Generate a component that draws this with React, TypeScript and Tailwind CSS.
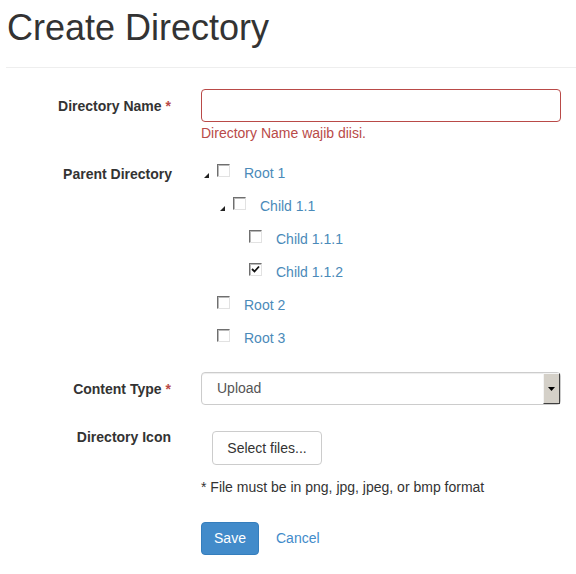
import React from 'react';

const font = { fontFamily: '"Liberation Sans", Arial, sans-serif' };

function Box({ checked = false }: { checked?: boolean }) {
  return (
    <span className="relative inline-block h-[13px] w-[13px] border border-t-[#6f6f6f] border-l-[#6f6f6f] border-b-[#e2e2e2] border-r-[#e2e2e2] bg-white shadow-[inset_1px_1px_0_#b9b9b9]">
      {checked && (
        <svg viewBox="0 0 11 11" className="absolute left-0 top-0 h-[11px] w-[11px]">
          <path d="M2 5 L4.5 7.5 L9 2.5" fill="none" stroke="#111" strokeWidth="1.8" />
        </svg>
      )}
    </span>
  );
}

function Caret() {
  return (
    <svg viewBox="0 0 5 5" className="h-[5px] w-[5px]">
      <polygon points="5,0 5,5 0,5" fill="#222" />
    </svg>
  );
}

function Node({ depth, label, open, checked }: { depth: number; label: string; open?: boolean; checked?: boolean }) {
  return (
    <div className="flex h-[33px] items-center" style={{ paddingLeft: depth * 16 }}>
      <span className="flex w-[16px] items-center pl-[3px] pt-[3px]">{open && <Caret />}</span>
      <span className="-mt-[6px] flex">
        <Box checked={checked} />
      </span>
      <span className="ml-[14px] text-[14px] text-[#4a8ab9]">{label}</span>
    </div>
  );
}

function Label({ children, req }: { children: React.ReactNode; req?: boolean }) {
  return (
    <div className="pt-[7px] pr-[1px] text-right text-[14px] font-bold leading-5 text-[#333]">
      {children}
      {req && <span className="ml-[4px] text-[#b94a48]">*</span>}
    </div>
  );
}

export default function App() {
  return (
    <div className="min-h-screen bg-white pl-[6px] text-[#333]" style={font}>
      <h1 className="pl-[1px] pt-[8px] text-[36px] font-normal leading-[40px] text-[#333]">Create Directory</h1>
      <hr className="mt-[19px] border-t border-[#eee]" />

      <div className="mt-[21px] grid grid-cols-[166px_360px] gap-x-[29px]">
        <Label req>Directory Name</Label>
        <div>
          <div className="h-[33px] rounded-[4px] border border-[#b94a48] bg-white" />
          <p className="mt-[1px] text-[14px] leading-5 text-[#b94a48]">Directory Name wajib diisi.</p>
        </div>

        <div className="mt-[14px]">
          <div className="pt-[7px] text-right text-[14px] font-bold leading-5 text-[#333]">Parent Directory</div>
        </div>
        <div className="mt-[14px]">
          <Node depth={0} label="Root 1" open />
          <Node depth={1} label="Child 1.1" open />
          <Node depth={2} label="Child 1.1.1" />
          <Node depth={2} label="Child 1.1.2" checked />
          <Node depth={0} label="Root 2" />
          <Node depth={0} label="Root 3" />
        </div>

        <div className="mt-[17px]">
          <Label req>Content Type</Label>
        </div>
        <div className="mt-[17px] flex h-[33px] items-stretch rounded-[4px] border border-[#ccc] bg-white shadow-[inset_0_1px_1px_rgba(0,0,0,0.075)]">
          <span className="flex flex-1 items-center pl-[15px] text-[14px] text-[#555]">Upload</span>
          <span className="flex w-[17px] items-center justify-center border border-t-[#f4f4f4] border-l-[#f4f4f4] border-b-[#404040] border-r-[#404040] bg-[#d4d0c8]">
            <svg viewBox="0 0 7 4" className="h-[4px] w-[7px]">
              <polygon points="0,0 7,0 3.5,4" fill="#000" />
            </svg>
          </span>
        </div>

        <div className="mt-[15px]">
          <Label>Directory Icon</Label>
        </div>
        <div className="mt-[26px] pl-[11px]">
          <div className="flex h-[34px] w-[110px] items-center justify-center rounded-[4px] border border-[#ccc] bg-white text-[14px] text-[#333]">
            Select files...
          </div>
        </div>

        <div />
        <p className="mt-[12px] text-[14px] leading-5 text-[#333]">* File must be in png, jpg, jpeg, or bmp format</p>

        <div />
        <div className="mt-[25px] flex items-center">
          <span className="flex h-[33px] w-[58px] items-center justify-center rounded-[4px] border border-[#357ebd] bg-[#428bca] text-[14px] text-white">Save</span>
          <span className="ml-[17px] text-[14px] text-[#428bca]">Cancel</span>
        </div>
      </div>
    </div>
  );
}
